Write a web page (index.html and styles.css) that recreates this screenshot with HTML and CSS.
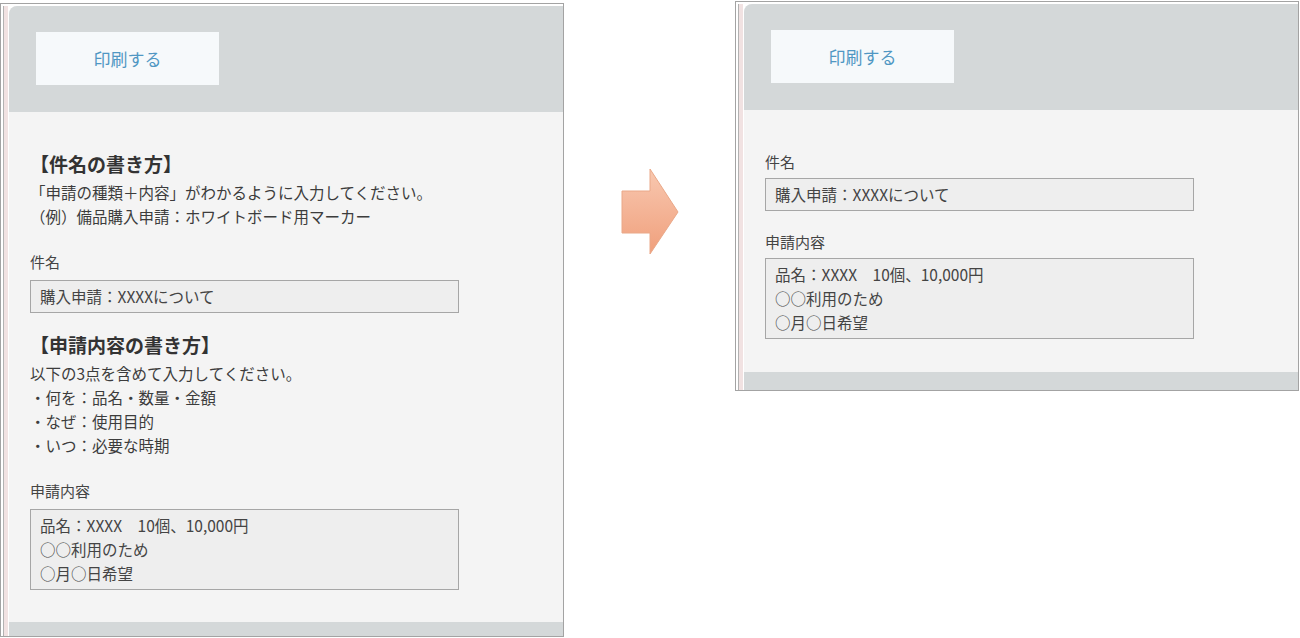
FILE: index.html
```html
<!DOCTYPE html>
<html lang="ja">
<head>
<meta charset="UTF-8" />
<title>申請フォームの書き方</title>
<link rel="stylesheet" href="styles.css">
</head>
<body>
  <div class="stage">
    <div class="frame frame-before">
      <div class="window">
        <div class="panel">
          <div class="toolbar"><button class="print-btn">印刷する</button></div>
          <div class="content">
            <div class="guide">
              <h2>【件名の書き方】</h2>
              <p>「申請の種類＋内容」がわかるように入力してください。</p>
              <p>（例）備品購入申請：ホワイトボード用マーカー</p>
            </div>
            <div class="field">
              <label>件名</label>
              <div class="box">購入申請：XXXXについて</div>
            </div>
            <div class="guide">
              <h2>【申請内容の書き方】</h2>
              <p>以下の3点を含めて入力してください。</p>
              <p>・何を：品名・数量・金額</p>
              <p>・なぜ：使用目的</p>
              <p>・いつ：必要な時期</p>
            </div>
            <div class="field">
              <label>申請内容</label>
              <div class="box">品名：XXXX　10個、10,000円<br>○○利用のため<br>○月○日希望</div>
            </div>
          </div>
          <div class="strip"></div>
        </div>
      </div>
    </div>

    <svg class="arrow" width="58" height="87" viewBox="0 0 58 87">
      <defs>
        <linearGradient id="arrowFill" x1="0" y1="0" x2="0" y2="1">
          <stop offset="0" stop-color="#f8c8b0" />
          <stop offset="1" stop-color="#f09f7c" />
        </linearGradient>
      </defs>
      <polygon points="1,23 29,23 29,1 57,44 29,86 29,65 1,65" fill="url(#arrowFill)" stroke="#eaa888" stroke-width="1" />
    </svg>

    <div class="frame frame-after">
      <div class="window">
        <div class="panel">
          <div class="toolbar"><button class="print-btn">印刷する</button></div>
          <div class="content">
            <div class="field">
              <label>件名</label>
              <div class="box">購入申請：XXXXについて</div>
            </div>
            <div class="field">
              <label>申請内容</label>
              <div class="box">品名：XXXX　10個、10,000円<br>○○利用のため<br>○月○日希望</div>
            </div>
          </div>
          <div class="strip"></div>
        </div>
      </div>
    </div>
  </div>
</body>
</html>
```

FILE: styles.css
```css
body {
  margin: 0;
  background: #ffffff;
  font-family: "Noto Sans CJK JP", "Noto Sans", sans-serif;
  color: #3c3c3c;
}
.stage {
  display: flex;
  align-items: flex-start;
}
.frame {
  width: 564px;
  box-sizing: border-box;
  border: 1px solid #a3a3a3;
  padding: 2px 0 0 2px;
  background: #ffffff;
}
.frame-before {
  margin-top: 3px;
}
.frame-after {
  margin-top: 1px;
  margin-left: 56px;
}
.arrow {
  flex: none;
  margin: 168px 0 0 57px;
}
.window {
  border-left: 1px solid #b2b2b2;
  padding-left: 5px;
  box-shadow: inset 4px 0 0 #f1e2e2;
}
.panel {
  background: #f4f4f4;
  border-top-left-radius: 8px;
  overflow: hidden;
}
.toolbar {
  height: 106px;
  box-sizing: border-box;
  padding: 26px 0 0 27px;
  background: #d4d8d9;
}
.print-btn {
  width: 183px;
  height: 53px;
  border: none;
  background: #f6f9fb;
  color: #5097c3;
  font-family: inherit;
  font-size: 17px;
  cursor: pointer;
}
.content {
  padding: 38px 0 32px 21px;
}
.frame-after .content {
  padding: 40px 0 33px 21px;
}
.guide h2 {
  margin: 0 0 2px;
  font-size: 19px;
  line-height: 28px;
  font-weight: 700;
  color: #333333;
}
.guide p {
  margin: 0;
  font-size: 15.5px;
  line-height: 24px;
}
.guide + .field {
  margin-top: 22px;
}
.field + .guide {
  margin-top: 18px;
}
.field + .field {
  margin-top: 19px;
}
.field label {
  display: block;
  margin-bottom: 6px;
  font-size: 15px;
  line-height: 24px;
  color: #444444;
}
.frame-after .field label {
  margin-bottom: 4px;
}
.box {
  width: 429px;
  box-sizing: border-box;
  border: 1px solid #a6a6a6;
  background: #eeeeee;
  padding: 3px 9px 4px;
  font-size: 15.5px;
  line-height: 24px;
  color: #444444;
}
.strip {
  height: 18px;
  background: #d4d8d9;
}
.frame-before .strip {
  height: 14px;
}
```
